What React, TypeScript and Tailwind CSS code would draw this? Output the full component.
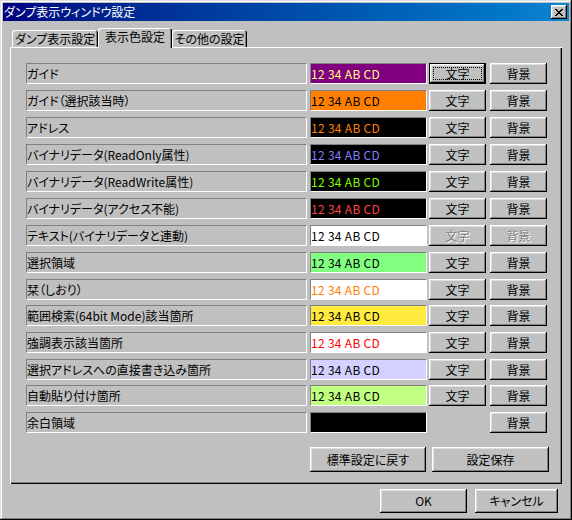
import type { ReactNode } from 'react';

interface ColorRow {
  label: string;
  bg: string;
  fg: string;
  mt: string;
  focus?: boolean;
  disabled?: boolean;
  noText?: boolean;
}

const rows: ColorRow[] = [
  { label: 'ガイド', bg: 'bg-[#800080]', fg: 'text-[#ffff80]', mt: 'mt-0', focus: true },
  { label: 'ガイド（選択該当時）', bg: 'bg-[#ff8000]', fg: 'text-black', mt: 'mt-[6px]' },
  { label: 'アドレス', bg: 'bg-black', fg: 'text-[#ff8000]', mt: 'mt-[6px]' },
  { label: 'バイナリデータ(ReadOnly属性)', bg: 'bg-black', fg: 'text-[#8080ff]', mt: 'mt-[6px]' },
  { label: 'バイナリデータ(ReadWrite属性)', bg: 'bg-black', fg: 'text-[#80ff00]', mt: 'mt-[6px]' },
  { label: 'バイナリデータ(アクセス不能)', bg: 'bg-black', fg: 'text-[#ff4040]', mt: 'mt-[6px]' },
  { label: 'テキスト(バイナリデータと連動)', bg: 'bg-white', fg: 'text-black', mt: 'mt-[6px]', disabled: true },
  { label: '選択領域', bg: 'bg-[#80ff80]', fg: 'text-black', mt: 'mt-[6px]' },
  { label: '栞（しおり）', bg: 'bg-white', fg: 'text-[#ff8000]', mt: 'mt-[6px]' },
  { label: '範囲検索(64bit Mode)該当箇所', bg: 'bg-[#ffeb40]', fg: 'text-black', mt: 'mt-[5px]' },
  { label: '強調表示該当箇所', bg: 'bg-white', fg: 'text-[#ff0000]', mt: 'mt-[6px]' },
  { label: '選択アドレスへの直接書き込み箇所', bg: 'bg-[#d4d0ff]', fg: 'text-black', mt: 'mt-[6px]' },
  { label: '自動貼り付け箇所', bg: 'bg-[#c0ff80]', fg: 'text-black', mt: 'mt-[5px]' },
  { label: '余白領域', bg: 'bg-black', fg: 'text-black', mt: 'mt-[6px]', noText: true },
];

const raised =
  'shadow-[inset_-1px_-1px_#000,inset_1px_1px_#fff,inset_-2px_-2px_#808080,inset_2px_2px_#dfdfdf]';
const sunken = 'border border-t-[#808080] border-l-[#808080] border-b-white border-r-white';

function Button({
  children,
  className = '',
  focus,
  disabled,
}: {
  children: ReactNode;
  className?: string;
  focus?: boolean;
  disabled?: boolean;
}) {
  return (
    <button
      className={`relative flex items-center justify-center bg-[#c0c0c0] ${raised} ${
        focus ? 'border border-black' : ''
      } ${disabled ? 'text-[#808080] [text-shadow:1px_1px_0_#fff]' : 'text-black'} ${className}`}
    >
      {focus && <span className="absolute inset-[3px] border border-dotted border-black" />}
      <span className="leading-none">{children}</span>
    </button>
  );
}

function CloseIcon() {
  const px = [
    [0, 0], [1, 0], [6, 0], [7, 0],
    [1, 1], [2, 1], [5, 1], [6, 1],
    [2, 2], [3, 2], [4, 2], [5, 2],
    [3, 3], [4, 3],
    [2, 4], [3, 4], [4, 4], [5, 4],
    [1, 5], [2, 5], [5, 5], [6, 5],
    [0, 6], [1, 6], [6, 6], [7, 6],
  ];
  return (
    <svg width="8" height="7" viewBox="0 0 8 7" shapeRendering="crispEdges">
      {px.map(([x, y]) => (
        <rect key={`${x}-${y}`} x={x} y={y} width="1" height="1" fill="#000" />
      ))}
    </svg>
  );
}

function Tab({ label, selected, className = '' }: { label: string; selected?: boolean; className?: string }) {
  return (
    <div
      className={`flex items-center justify-center rounded-t-[3px] bg-[#c0c0c0] shadow-[inset_1px_1px_#fff,inset_-1px_0_#000,inset_-2px_0_#808080] ${
        selected ? 'relative z-10 h-[20px] -mb-[1px] pb-[2px]' : 'h-[17px]'
      } ${className}`}
    >
      {label}
    </div>
  );
}

export default function App() {
  return (
    <div className="w-[572px] h-[520px] bg-[#c0c0c0] p-[3px] flex flex-col text-[12px] text-black font-['Noto_Sans_CJK_JP','Noto_Sans',sans-serif] [font-feature-settings:'palt'] shadow-[inset_-1px_-1px_#000,inset_1px_1px_#dfdfdf,inset_-2px_-2px_#808080,inset_2px_2px_#fff]">
      {/* Title bar */}
      <div className="h-[18px] flex items-center justify-between bg-linear-to-r from-[#000080] to-[#1084d0]">
        <span className="pl-[1px] text-white leading-none">ダンプ表示ウィンドウ設定</span>
        <button className={`mr-[2px] w-[16px] h-[14px] flex items-center justify-center bg-[#c0c0c0] ${raised}`}>
          <CloseIcon />
        </button>
      </div>

      <div className="px-[7px] pt-[7px] flex flex-col">
        {/* Tabs */}
        <div className="flex items-end pl-[2px] h-[19px]">
          <Tab label="ダンプ表示設定" className="w-[86px]" />
          <Tab label="表示色設定" selected className="w-[74px]" />
          <Tab label="その他の設定" className="w-[75px]" />
        </div>

        {/* Panel */}
        <div className="h-[437px] pt-[16px] pl-[16px] flex flex-col shadow-[inset_1px_1px_#fff,inset_-1px_-1px_#000,inset_-2px_-2px_#808080]">
          {rows.map(r => (
            <div key={r.label} className={`flex h-[21px] ${r.mt}`}>
              <div className={`w-[281px] flex items-center whitespace-nowrap ${sunken}`}>{r.label}</div>
              <div
                className={`ml-[3px] w-[117px] flex items-center whitespace-pre tracking-[0.3px] ${sunken} ${r.bg} ${r.fg}`}
              >
                {r.noText ? '' : '12 34 AB CD'}
              </div>
              {r.noText ? (
                <div className="ml-[2px] w-[57px]" />
              ) : (
                <Button className="ml-[2px] w-[57px]" focus={r.focus} disabled={r.disabled}>
                  文字
                </Button>
              )}
              <Button className="ml-[4px] w-[57px]" disabled={r.disabled}>
                背景
              </Button>
            </div>
          ))}

          <div className="flex mt-[14px] ml-[284px]">
            <Button className="w-[116px] h-[25px]">標準設定に戻す</Button>
            <Button className="ml-[6px] w-[117px] h-[25px]">設定保存</Button>
          </div>
        </div>

        {/* Dialog buttons */}
        <div className="flex mt-[5px] ml-[370px]">
          <Button className="w-[87px] h-[24px]">OK</Button>
          <Button className="ml-[8px] w-[83px] h-[24px]">キャンセル</Button>
        </div>
      </div>
    </div>
  );
}
